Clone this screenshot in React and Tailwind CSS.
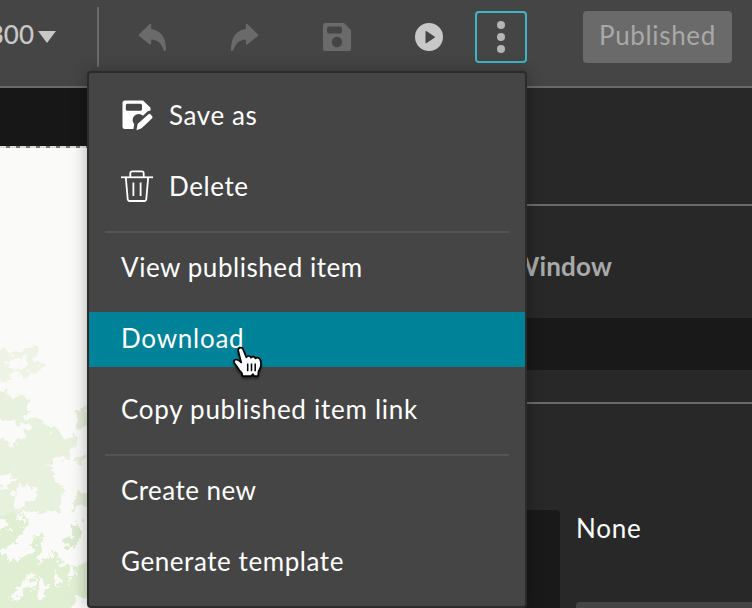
import React, { useState } from 'react';

const UndoIcon = ({ className }) => (
    <svg viewBox="0 0 30 30" className={className} fill="currentColor">
        <path d="M1.2 11.6 11.8 1.2c.7-.7 1.8-.3 1.8.7v4.4C23.300 7.500 29 14.500 29 28c0 1.300-2.200 1.300-2.600 0-1.800-6.600-5.900-10.400-12.800-10.900v4.200c0 1-1.100 1.400-1.800.7L1.200 13.500c-.6-.6-.6-1.300 0-1.900z" />
    </svg>
);

const SaveIcon = ({ className }) => (
    <svg viewBox="0 0 28 28" className={className} fill="currentColor" fillRule="evenodd">
        <path d="M2 0h19l7 7v19a2 2 0 0 1-2 2H2a2 2 0 0 1-2-2V2a2 2 0 0 1 2-2zm4 3.500A2 2 0 0 0 4 5.500v3a2 2 0 0 0 2 2h11a2 2 0 0 0 2-2v-3a2 2 0 0 0-2-2zm8 10.300a5.200 5.200 0 1 0 0 10.400 5.200 5.200 0 0 0 0-10.400z" />
    </svg>
);

const PlayIcon = ({ className }) => (
    <svg viewBox="0 0 28 28" className={className} fill="currentColor" fillRule="evenodd">
        <path d="M14 0a14 14 0 1 1 0 28 14 14 0 0 1 0-28zm-3.500 8.500v11.300c0 .5.400.7.800.4l8.500-5.600a.5.5 0 0 0 0-.8l-8.500-5.700c-.4-.3-.8-.1-.8.4z" />
    </svg>
);

const SaveAsIcon = () => (
    <svg viewBox="0 0 32 32" className="size-8 shrink-0" fill="none">
        <path fill="#fff" fillRule="evenodd" d="M4 1.500h18l7.500 7.200v3.100c-1.300-.3-2.600.1-3.600 1.100L22 16.800a5.600 5.600 0 1 0-8.700 8.500l-.9 4.700H4a2.500 2.500 0 0 1-2.500-2.500V4A2.500 2.500 0 0 1 4 1.500zm2.300 3.200a1.500 1.500 0 0 0-1.500 1.500v4a1.500 1.500 0 0 0 1.500 1.500h13.200a1.500 1.500 0 0 0 1.500-1.500v-4a1.500 1.500 0 0 0-1.500-1.500z" />
        <path fill="#fff" d="M15.500 31.200l1.100-6.200 10.600-9.600c.9-.8 1.800-.7 2.500.1l1.300 1.400c.7.8.7 1.700-.1 2.500L20.600 29.200z" />
    </svg>
);

const TrashIcon = () => (
    <svg viewBox="0 0 32 32" className="size-8 shrink-0" fill="none" stroke="#fff" strokeWidth="1.800">
        <path d="M0 7.300h32" />
        <path d="M9.300 7V3.300a2 2 0 0 1 2-2h9.400a2 2 0 0 1 2 2V7" />
        <path d="M4.800 7.300 6.700 29c.1 1.200.9 2 2 2h14.600c1.100 0 1.900-.8 2-2l1.900-21.700" />
        <path d="M12.400 12.500v13.500M19.600 12.500v13.500" />
    </svg>
);

const HandCursor = () => (
    <svg viewBox="0 0 34 38" className="pointer-events-none absolute top-[272px] left-[143px] h-[38px] w-[34px] drop-shadow-[0_2px_1px_rgba(0,0,0,0.5)]">
        <path
            d="M6.300 6c-.8-3.200 3.400-4.600 4.800-1.600l3.300 7.900c1-1.800 3.800-1.800 4.600.3 1.100-1.600 3.800-1.300 4.500.8 1.200-1.200 3.800-.8 4.600 1.100 1 2 1.100 4.400.6 7-.4 2.200-2 3.800-2.300 5.500l-.2 4-3.900.2-1.300-2-2 2H10.500l-.6-3.200c-1.700-1.600-3.400-3.600-4.400-5.600-.9-1.800-2.400-3-3.300-4.700-.9-1.800.5-3.300 2.200-3.200 2 .2 3.300 1.500 4.800 3z"
            fill="#fff"
            stroke="#000"
            strokeWidth="1.700"
            strokeLinejoin="round"
        />
        <path d="M15.700 18.500v7.800M19.500 18.500v7.800M23.200 18.500v7.800" stroke="#000" strokeWidth="1.500" />
    </svg>
);

// Light relief map with rough vegetation patches
const MapPreview = () => (
    <svg viewBox="0 0 96 462" className="h-[462px] w-24 bg-[#fafaf9]">
        <filter id="rough" x="-20%" y="-20%" width="140%" height="140%" colorInterpolationFilters="sRGB">
            <feTurbulence type="fractalNoise" baseFrequency="0.13" numOctaves="4" seed="4" />
            <feDisplacementMap in="SourceGraphic" scale="18" xChannelSelector="R" yChannelSelector="G" />
        </filter>
        <g filter="url(#rough)">
            <path d="M-10 200H0L12 206 22 202 40 198 36 210 44 214 42 222 34 227 27 221 26 228 14 226 10 234-10 234z" fill="#edf4e5" />
            <path d="M-10 242H0L10 247 33 249 27 259 25 269 43 274 63 289 73 287 80 289 72 307 50 315 47 319 58 329 63 345 60 362 50 365 17 365 0 370H-10z" fill="#e7f1dd" />
            <path d="M77 262 96 256V278L75 281z" fill="#e4eed9" />
            <path d="M75 312 96 300V307L80 317z" fill="#e7f1dd" />
            <path d="M73 349 96 340V355L72 360z" fill="#e4eed9" />
            <path d="M63 395 80 374V395L70 403z" fill="#dcebcf" />
            <path d="M-10 362 25 369 23 389 3 402 10 415 20 409 30 405 36 387 41 389 38 415 52 412 50 405 70 422 74 424 87 412 106 404V480H-10z" fill="#e0eed2" />
        </g>
        <g filter="url(#rough)" fill="#fafaf9">
            <path d="M-9 273 30 275 25 285 17 298-9 289z" />
            <path d="M-9 329 15 325 14 335-9 343z" />
            <path d="M20 337 37 342 31 352 17 362 12 349z" />
            <path d="M8 209 22 209 26 215 20 222 6 219z" />
            <path d="M-6 368 6 372 10 381-6 384z" />
            <path d="M8 451 24 432 38 426 32 440 12 453z" />
            <path d="M36 452 42 425 46 440 40 450z" />
            <path d="M53 433 58 422 62 438z" />
            <path d="M68 438 70 424 74 434z" />
            <path d="M70 460 77 450 96 454V480H70z" />
        </g>
    </svg>
);

const MenuItem = ({ icon, label, tracking, active }) => (
    <button className={`flex h-[55px] w-full items-center gap-4 px-8 pb-[3px] text-left ${active ? 'bg-[#008298]' : ''}`}>
        {icon}
        <span className={`-mt-px whitespace-nowrap ${tracking}`}>{label}</span>
    </button>
);

const Separator = () => <div className="mx-4 mt-4 mb-2 h-0.5 bg-[#545454]" />;

const App = () => {
    const [menuOpen, setMenuOpen] = useState(true);

    return (
        <div className="relative flex h-[608px] w-[752px] flex-col overflow-hidden bg-[#282828] font-[Lato,sans-serif] text-[26px] leading-8 text-white">
            <header className="flex h-[88px] shrink-0 border-b-2 border-[#6a6a6a] bg-[#454545] text-[#6a6a6a]">
                <div className="flex w-[97px] items-start pt-[7px]">
                    <div className="flex w-14 items-center justify-end gap-1 pt-3 text-[#c8c8c8]">
                        <span className="-mt-px font-medium">300</span>
                        <svg viewBox="0 0 18 12" className="mt-1 h-3 w-[18px] shrink-0" fill="currentColor">
                            <path d="M0 0h18L9 12z" />
                        </svg>
                    </div>
                </div>
                <div className="mt-[7px] h-[60px] w-0.5 bg-[#6a6a6a]" />
                <div className="flex h-[74px] items-center pl-[39px]">
                    <UndoIcon className="size-[29px]" />
                    <UndoIcon className="ml-[63px] size-[29px] -scale-x-100" />
                    <SaveIcon className="ml-16 size-7" />
                    <PlayIcon className="ml-16 size-7 text-[#c8c8c8]" />
                    <button
                        onClick={() => setMenuOpen(!menuOpen)}
                        className="ml-8 flex h-[52px] w-[52px] flex-col items-center justify-center gap-1 rounded-[4px] border-2 border-[#3fb6c6]"
                    >
                        <span className="size-2 rounded-full bg-[#b5b5b5]" />
                        <span className="size-2 rounded-full bg-[#b5b5b5]" />
                        <span className="size-2 rounded-full bg-[#b5b5b5]" />
                    </button>
                    <button className="ml-14 h-[52px] w-[149px] rounded-[4px] bg-[#6a6a6a] pb-1 text-[#a9a9a9]">
                        <span className="tracking-[0.65px]">Published</span>
                    </button>
                </div>
            </header>

            <div className="flex min-h-0 flex-1">
                <main className="w-24 shrink-0 overflow-hidden bg-[#171717] pt-[58px]">
                    <div className="h-0.5 bg-[repeating-linear-gradient(90deg,#ddd_0_6px,#777_6px_10px)]" />
                    <MapPreview />
                </main>
                <aside className="flex flex-1 flex-col">
                    <div className="h-[116px] shrink-0" />
                    <div className="h-0.5 shrink-0 bg-[#6a6a6a]" />
                    <div className="flex h-28 shrink-0 items-center pt-2 pl-[416px] font-bold text-[#a9a9a9]">
                        <span className="tracking-[0.2px]">Window</span>
                    </div>
                    <div className="h-[52px] shrink-0 bg-[#191919]" />
                    <div className="h-8 shrink-0" />
                    <div className="h-0.5 shrink-0 bg-[#6a6a6a]" />
                    <div className="mt-[106px] flex flex-1 gap-4 pl-[400px]">
                        <div className="w-16 rounded-tr-[4px] bg-[#191919]" />
                        <div className="flex flex-1 flex-col justify-between">
                            <span className="pt-0.5 tracking-[0.8px]">None</span>
                            <div className="h-1.5 rounded-tl-[4px] bg-[#454545]" />
                        </div>
                    </div>
                </aside>
            </div>

            {menuOpen && (
                <div className="absolute top-[71px] left-[87px] h-[537px] w-[440px] rounded-[4px] border-2 border-[#2b2b2b] bg-[#454545] pt-4 shadow-[0_0_16px_rgba(0,0,0,0.3)]">
                    <div className="flex flex-col gap-4">
                        <MenuItem icon={<SaveAsIcon />} label="Save as" tracking="tracking-[0.6px]" />
                        <MenuItem icon={<TrashIcon />} label="Delete" tracking="tracking-[0.6px]" />
                    </div>
                    <Separator />
                    <div className="flex flex-col gap-4">
                        <MenuItem label="View published item" tracking="tracking-[0.55px]" />
                        <MenuItem label="Download" tracking="tracking-[0.75px]" active />
                        <MenuItem label="Copy published item link" tracking="tracking-[0.72px]" />
                    </div>
                    <Separator />
                    <div className="flex flex-col gap-4">
                        <MenuItem label="Create new" tracking="tracking-[0.45px]" />
                        <MenuItem label="Generate template" tracking="tracking-[0.57px]" />
                    </div>
                    <HandCursor />
                </div>
            )}
        </div>
    );
};

export default App;
